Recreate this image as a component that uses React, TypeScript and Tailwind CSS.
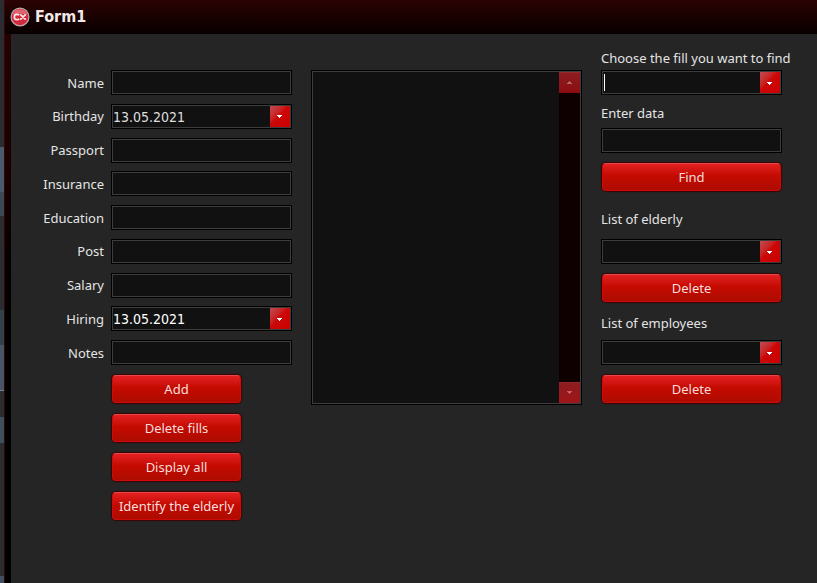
import { useState, type ReactNode } from "react";

const FIELD =
  "flex h-[25px] min-w-0 flex-1 border border-black bg-[#111111] text-[#e6e6e6]";
const INNER = "min-w-0 flex-1 border border-[#3d3d3d] outline-none";
const DIGITS = "font-['DejaVu_Sans_Condensed','DejaVu_Sans',sans-serif] text-[14px]";

function Arrow({ up = false }: { up?: boolean }) {
  return (
    <svg width="7" height="4" viewBox="0 0 7 4" fill="currentColor" aria-hidden="true">
      {up ? <path d="M3 0h1v1h1v1h1v1H1V2h1V1h1z" /> : <path d="M1 0h5v1H5v1H4v1H3V2H2V1H1z" />}
    </svg>
  );
}

const ARROW_BOX =
  "flex w-5 shrink-0 items-center justify-center pt-0.5 pr-0.5 bg-linear-to-br from-[#c04850] via-[#cb0808] via-45% to-[#cc0000] text-white";

function TextField({ id }: { id: string }) {
  return (
    <div className={FIELD}>
      <input id={id} type="text" className={`${INNER} ${DIGITS} bg-transparent px-px`} />
    </div>
  );
}

function DateField({ id, strong }: { id: string; strong?: boolean }) {
  const [value, setValue] = useState("13.05.2021");
  return (
    <div className={FIELD}>
      <div className="flex min-w-0 flex-1 border border-[#3d3d3d]">
        <input
          id={id}
          type="text"
          value={value}
          onChange={(e) => setValue(e.target.value)}
          className={`${DIGITS} min-w-0 flex-1 bg-transparent pt-0.5 outline-none ${strong ? "text-white" : "text-[#dedede]"}`}
        />
        <button type="button" aria-label="Open calendar" className={ARROW_BOX}>
          <Arrow />
        </button>
      </div>
    </div>
  );
}

function SelectField({ id, caret }: { id: string; caret?: boolean }) {
  return (
    <div className={`${FIELD} relative`}>
      <select id={id} className={`${INNER} appearance-none bg-transparent`} />
      {caret && <span className="absolute top-[3px] left-[2px] h-[17px] w-px bg-white" />}
      <span className={`${ARROW_BOX} pointer-events-none absolute inset-y-px right-px`}>
        <Arrow />
      </span>
    </div>
  );
}

function Button({ children }: { children: ReactNode }) {
  return (
    <div className="flex px-px">
      <button
        type="button"
        className="h-7 flex-1 rounded-[4px] border border-[#d00a0a] border-t-[#e84848] bg-linear-to-b from-[#e32020] via-[#c40a00] via-45% to-[#ae0c00] pt-0.5 text-center whitespace-nowrap text-[#f6dede] shadow-[0_0_1px_1px_#3a0505]"
      >
        {children}
      </button>
    </div>
  );
}

const ROWS = [
  { id: "name", label: "Name" },
  { id: "birthday", label: "Birthday", date: true },
  { id: "passport", label: "Passport" },
  { id: "insurance", label: "Insurance" },
  { id: "education", label: "Education" },
  { id: "post", label: "Post" },
  { id: "salary", label: "Salary" },
  { id: "hiring", label: "Hiring", date: true, strong: true },
  { id: "notes", label: "Notes" },
];

function Label({ id, children }: { id: string; children: ReactNode }) {
  return (
    <label htmlFor={id} className="block h-5 leading-5 whitespace-nowrap">
      {children}
    </label>
  );
}

function Backdrop() {
  return (
    <div className="flex w-1 shrink-0 flex-col bg-[#2c2c30]" aria-hidden="true">
      <div className="h-[147px]" />
      <div className="h-[45px] bg-[#4a5a6b]" />
      <div className="h-6 bg-[#3b4856]" />
      <div className="h-[94px]" />
      <div className="h-[35px] bg-[#34414a]" />
      <div className="h-[45px] bg-[#475564]" />
      <div className="h-px bg-[#77818a]" />
      <div className="h-[26px]" />
      <div className="h-[26px] bg-[#3f505c]" />
      <div className="h-[133px]" />
      <div className="flex-1 bg-[#43505f]" />
    </div>
  );
}

export default function App() {
  return (
    <div className="flex min-h-screen bg-black font-['Noto_Sans','Open_Sans',sans-serif] text-[13px] text-[#e4e4e4]">
      <Backdrop />
      <div className="flex min-w-0 flex-1 flex-col border-l border-[#300806] bg-linear-to-b from-[#280303] via-[#180000] via-30% to-black to-65% pl-[6px]">
        <header className="-ml-[6px] flex h-[34px] items-center gap-[5px] bg-linear-to-b from-[#2c0303] to-[#080000] pl-[5px]">
          <svg width="20" height="20" viewBox="0 0 20 20" aria-hidden="true">
            <circle cx="10" cy="10" r="9.5" fill="#b9a9a9" />
            <circle cx="10" cy="10" r="8.3" fill="#d3283c" />
            <path d="M2.500 8a7.800 7.800 0 0 1 15 0q-7.500-3-15 0z" fill="#de6470" />
            <path
              d="M9.200 8.200Q8.300 7.300 7 7.300 4.300 7.300 4.300 10t2.700 2.700Q8.300 12.700 9.200 11.800M10.300 7.300l5.400 5.400M15.700 7.300l-5.400 5.400"
              fill="none"
              stroke="#fbe9e9"
              strokeWidth="1.700"
            />
          </svg>
          <h1 className="font-['DejaVu_Sans_Condensed','DejaVu_Sans',sans-serif] text-[16px] leading-5 font-bold text-[#f2e8e8]">
            Form1
          </h1>
        </header>
        <main className="flex flex-1 items-start gap-[19px] bg-[#252525] pt-9 pr-[35px] pb-6 pl-[30px]">
          <form className="w-[251px] shrink-0">
            <div className="flex h-[295px] flex-col justify-between">
              {ROWS.map((r) => (
                <div key={r.id} className="flex items-center gap-[7px]">
                  <label htmlFor={r.id} className="flex w-[63px] shrink-0 justify-end leading-5">
                    {r.label}
                  </label>
                  {r.date ? <DateField id={r.id} strong={r.strong} /> : <TextField id={r.id} />}
                </div>
              ))}
            </div>
            <div className="mt-[10px] ml-[70px] flex w-[131px] flex-col gap-[11px]">
              <Button>Add</Button>
              <Button>Delete fills</Button>
              <Button>Display all</Button>
              <Button>Identify the elderly</Button>
            </div>
          </form>

          <section className="h-[335px] min-w-0 flex-1 border border-black bg-[#111111]" aria-label="Records">
            <div className="flex h-full justify-end border border-[#3d3d3d]">
              <div className="flex w-[21px] flex-col justify-between bg-[#0e0000]">
                <button
                  type="button"
                  aria-label="Scroll up"
                  className="flex h-[21px] items-center justify-center border-t border-[#94282c] bg-linear-to-b from-[#8c1c20] to-[#8c0c10] text-[#b06a6a]"
                >
                  <Arrow up />
                </button>
                <button
                  type="button"
                  aria-label="Scroll down"
                  className="flex h-[21px] items-center justify-center border-t border-[#94282c] bg-linear-to-b from-[#8c1c20] to-[#a01418] text-[#c06060]"
                >
                  <Arrow />
                </button>
              </div>
            </div>
          </section>

          <aside className="-mt-[22px] w-[181px] shrink-0">
            <Label id="fill">Choose the fill you want to find</Label>
            <div className="mt-[2px] flex">
              <SelectField id="fill" caret />
            </div>
            <div className="mt-2">
              <Label id="data">Enter data</Label>
            </div>
            <div className="mt-[5px] mb-[10px] flex">
              <TextField id="data" />
            </div>
            <Button>Find</Button>
            <div className="mt-[18px]">
              <Label id="elderly">List of elderly</Label>
            </div>
            <div className="my-[10px] flex">
              <SelectField id="elderly" />
            </div>
            <Button>Delete</Button>
            <div className="mt-[11px]">
              <Label id="employees">List of employees</Label>
            </div>
            <div className="mt-[7px] mb-[10px] flex">
              <SelectField id="employees" />
            </div>
            <Button>Delete</Button>
          </aside>
        </main>
      </div>
    </div>
  );
}
